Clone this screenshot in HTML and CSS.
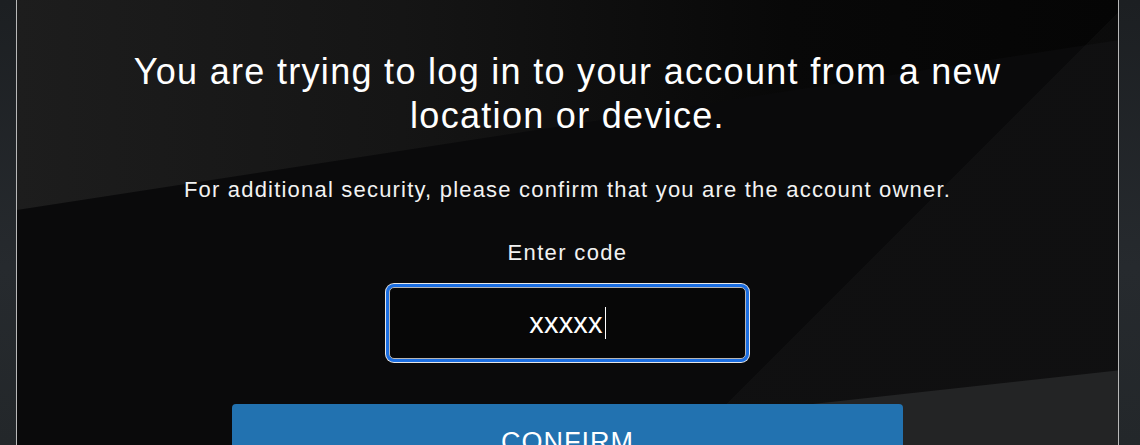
FILE: index.html
```html
<!DOCTYPE html>
<html lang="en">
<head>
<meta charset="utf-8">
<title>Verify login</title>
<link rel="stylesheet" href="styles.css">
</head>
<body>
  <main class="panel">
    <h1 class="title">You are trying to log in to your account from a new location or device.</h1>
    <p class="subtitle">For additional security, please confirm that you are the account owner.</p>
    <label class="label" for="code">Enter code</label>
    <div class="code-field" id="code" role="textbox" tabindex="0"><span class="code-value">xxxxx</span><span class="caret"></span></div>
    <button class="confirm" type="button">CONFIRM</button>
  </main>
</body>
</html>
```
FILE: styles.css
```css
html, body {
  margin: 0;
  padding: 0;
}
body {
  height: 445px;
  overflow: hidden;
  background: linear-gradient(180deg, #1c1f22 0%, #262a2e 60%, #23272a 100%);
  font-family: "Liberation Sans", Arial, sans-serif;
  color: #fff;
}
.panel {
  box-sizing: border-box;
  width: 1103px;
  margin-left: 16px;
  min-height: 520px;
  border-left: 1px solid #b9b9b9;
  border-right: 1px solid #b9b9b9;
  padding-top: 50px;
  display: flex;
  flex-direction: column;
  align-items: center;
  background-color: #0b0b0c;
  background-repeat: no-repeat;
  background-size: 100% 445px;
  background-image:
    linear-gradient(173.73deg, transparent 488px, #232425 489px),
    linear-gradient(135deg, transparent 0 72%, rgba(255,255,255,0.025) 72%),
    linear-gradient(171.24deg, transparent 207px, #0a0a0b 208px),
    linear-gradient(90deg, #1d1d1d 0%, #151515 35%, #080808 70%, #050505 100%);
}
.title {
  margin: 0;
  width: 940px;
  font-size: 36px;
  line-height: 44px;
  letter-spacing: 1.3px;
  font-weight: normal;
  text-align: center;
  color: #fff;
}
.subtitle {
  margin: 40px 0 0;
  font-size: 22px;
  line-height: 24px;
  letter-spacing: 1.2px;
  color: #f2f2f2;
  text-align: center;
}
.label {
  margin-top: 39px;
  font-size: 22px;
  line-height: 24px;
  letter-spacing: 1.35px;
  color: #f2f2f2;
}
.code-field {
  box-sizing: border-box;
  margin-top: 22px;
  width: 357px;
  height: 72px;
  border: 1px solid #b5b5b5;
  border-radius: 5px;
  background: #070707;
  box-shadow: 0 0 0 3px #1b6ee2, 0 0 0 4px #e6e6e6;
  display: flex;
  align-items: center;
  justify-content: center;
  outline: none;
}
.code-value {
  font-size: 29px;
  line-height: 32px;
  letter-spacing: 0.2px;
  color: #fff;
}
.caret {
  display: inline-block;
  width: 1px;
  height: 32px;
  margin-left: 2px;
  background: #fff;
}
.confirm {
  margin-top: 45px;
  width: 671px;
  height: 76px;
  border: 0;
  border-radius: 4px;
  background: #2272b0;
  color: #fff;
  font-family: "Liberation Sans", Arial, sans-serif;
  font-size: 27px;
  line-height: 32px;
  letter-spacing: 1px;
  padding: 0;
}
```
